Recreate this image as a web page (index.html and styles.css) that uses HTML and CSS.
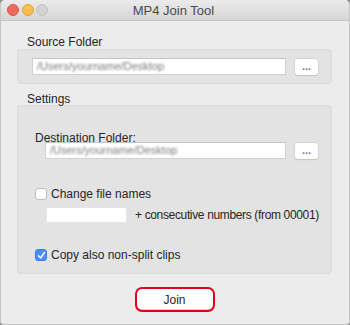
FILE: index.html
```html
<!DOCTYPE html>
<html>
<head>
    <meta name="viewport" content="width=device-width initial-scale=1.0">
    <title>MP4 Join Tool</title>
    <link rel="stylesheet" href="styles.css">
</head>
<body>
    <div class="window">
        <div class="titlebar">
            <div class="lights">
                <span class="light red"></span>
                <span class="light yellow"></span>
                <span class="light gray"></span>
            </div>
            <div class="title">MP4 Join Tool</div>
        </div>
        <div class="content">
            <div class="group_label first">Source Folder</div>
            <div class="group source_group">
                <div class="path_row">
                    <div class="path_field"><span class="blurred">/Users/yourname/Desktop</span></div>
                    <button class="browse_button">...</button>
                </div>
            </div>
            <div class="group_label">Settings</div>
            <div class="group settings_group">
                <div class="field_label">Destination Folder:</div>
                <div class="path_row indented">
                    <div class="path_field"><span class="blurred">/Users/yourname/Desktop</span></div>
                    <button class="browse_button">...</button>
                </div>
                <label class="check_row rename_row">
                    <span class="checkbox"></span>
                    <span>Change file names</span>
                </label>
                <div class="rename_options">
                    <div class="name_field"></div>
                    <span class="suffix_text">+ consecutive numbers (from 00001)</span>
                </div>
                <label class="check_row copy_row">
                    <span class="checkbox checked">
                        <svg width="9" height="9" viewBox="0 0 9 9"><path d="M1.5 4.8 L3.6 7 L7.6 1.4" fill="none" stroke="#fff" stroke-width="1.5" stroke-linecap="round" stroke-linejoin="round"/></svg>
                    </span>
                    <span>Copy also non-split clips</span>
                </label>
            </div>
            <div class="join_wrap">
                <button class="join_button">Join</button>
            </div>
        </div>
    </div>
</body>
</html>
```

FILE: styles.css
```css
* {
    box-sizing: border-box;
}
body {
    margin: 0;
    background: #8e8e8e;
    font-family: "Liberation Sans", Arial, sans-serif;
    font-size: 12px;
    color: #262626;
}
.window {
    width: 350px;
    height: 325px;
    background: #ececec;
    border-radius: 5px 5px 4px 4px;
    overflow: hidden;
    border: 1px solid #c4c4c4;
    border-top: none;
}
.titlebar {
    height: 21px;
    background: linear-gradient(#ebebeb, #d6d6d6);
    border-bottom: 1px solid #c6c6c6;
    display: flex;
    align-items: center;
    padding-left: 6px;
}
.lights {
    display: flex;
    gap: 2.5px;
}
.light {
    width: 12px;
    height: 12px;
    border-radius: 50%;
}
.red {
    background: #ed6a5e;
    border: 1px solid #d6574c;
}
.yellow {
    background: #f5c04f;
    border: 1px solid #dba43b;
}
.gray {
    background: #d3d3d3;
    border: 1px solid #c2c2c2;
}
.title {
    flex: 1;
    text-align: center;
    margin-right: 50px;
    font-size: 13px;
    color: #4a4a4a;
}
.content {
    padding: 0 17px 0 16px;
}
.group_label {
    height: 12px;
    line-height: 12px;
    padding-left: 10px;
    margin-top: 9px;
}
.group_label.first {
    margin-top: 15px;
}
.group {
    background: #e3e3e3;
    border: 1px solid #dadada;
    border-radius: 4px;
}
.source_group {
    height: 35px;
    margin-top: 1px;
    padding: 8px 13px 0 14px;
}
.path_row {
    display: flex;
    align-items: center;
}
.path_row.indented {
    padding-left: 10px;
}
.path_field {
    flex: 1;
    height: 17px;
    background: #fff;
    border: 1px solid #d0d0d0;
    border-top-color: #c4c4c4;
    padding-left: 4px;
    line-height: 15px;
    overflow: hidden;
    white-space: nowrap;
}
.blurred {
    color: #7a7a7a;
    font-size: 11px;
    filter: blur(1.2px);
}
.browse_button {
    width: 23px;
    height: 16px;
    margin-left: 9px;
    padding: 0 0 2px;
    background: #fff;
    border: none;
    border-radius: 3px;
    box-shadow: 0 0 0 0.5px #c8c8c8, 0 1px 1px #bdbdbd;
    font-family: "Liberation Sans", Arial, sans-serif;
    font-size: 11px;
    font-weight: bold;
    color: #777;
    line-height: 14px;
}
.settings_group {
    height: 169px;
    padding: 25px 13px 0 17px;
}
.field_label {
    height: 14px;
    line-height: 14px;
    margin-bottom: -3px;
}
.check_row {
    display: flex;
    align-items: center;
    height: 14px;
    white-space: nowrap;
}
.rename_row {
    margin-top: 28px;
}
.copy_row {
    margin-top: 25px;
}
.checkbox {
    width: 12px;
    height: 12px;
    background: #fff;
    border: 1px solid #bdbdbd;
    border-radius: 3px;
    margin-right: 4px;
    display: flex;
    align-items: center;
    justify-content: center;
}
.checkbox.checked {
    background: #4a8ff7;
    border-color: #3c7de3;
}
.rename_options {
    display: flex;
    align-items: center;
    margin-top: 6px;
    padding-left: 11px;
    white-space: nowrap;
}
.name_field {
    flex-shrink: 0;
    width: 81px;
    height: 16px;
    background: #fff;
    border: 1px solid #e6e6e6;
    margin-right: 8px;
}
.suffix_text {
    letter-spacing: -0.35px;
}
.join_wrap {
    display: flex;
    justify-content: center;
    margin-top: 13px;
}
.join_button {
    width: 80px;
    height: 25px;
    background: #fff;
    border: 2px solid #e2001a;
    border-radius: 7px;
    box-shadow: inset 0 -1px 0 #cfcfcf;
    font-family: "Liberation Sans", Arial, sans-serif;
    font-size: 12px;
    color: #262626;
    padding: 0;
}
```
